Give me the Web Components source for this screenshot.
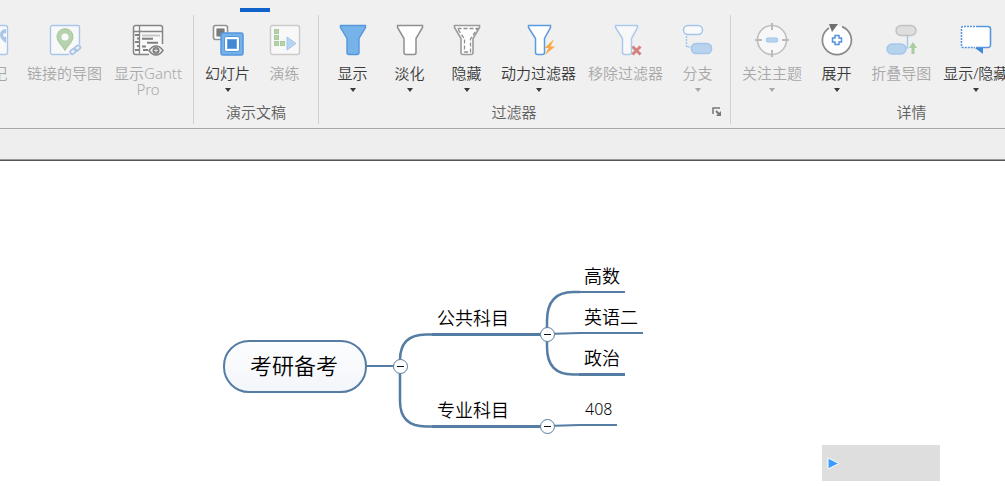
<!DOCTYPE html>
<html lang="zh-CN">
<head>
<meta charset="utf-8">
<title>考研备考</title>
<style>
  html, body { margin: 0; height: 100%; }
  body {
    font-family: "Noto Sans", "Noto Sans CJK SC", sans-serif;
    font-weight: 350;
    background: #fff;
    overflow: hidden;
  }
</style>
</head>
<body>
<mind-app></mind-app>
<script>
const ICONS = {
  tag: `<rect x="1.5" y="1.5" width="29" height="29" rx="2" fill="#f8f8f8" stroke="#a9c6ea" stroke-width="1.4"/>
    <path d="M29 5q-6 0-6 6 0 4 6 8z" fill="#a9c6ea"/><circle cx="28" cy="11" r="2" fill="#f8f8f8"/>`,
  linkmap: `<path d="M20 30.500H3a1.500 1.500 0 0 1-1.500-1.500V3A1.500 1.500 0 0 1 3 1.500h26A1.500 1.500 0 0 1 30.500 3v17" fill="#f8f8f8" stroke="#a9c6ea" stroke-width="1.400"/>
    <path d="M16 26.500C14 22.500 8 18 8 12.500a8 7.800 0 0 1 16 0C24 18 18 22.500 16 26.500z" fill="#b7d2ae" stroke="#a4c79a"/>
    <circle cx="16" cy="13" r="3.600" fill="#fafafa"/>
    <g fill="none" stroke="#a9c6ea" stroke-width="1.800"><rect x="21" y="25.500" width="6.500" height="4" rx="2" transform="rotate(-40 24 27.500)"/><rect x="25" y="22" width="6.500" height="4" rx="2" transform="rotate(-40 28.500 24)"/></g>`,
  gantt: `<path d="M17 30.500H3.500A2 2 0 0 1 1.500 28.500V3.500a2 2 0 0 1 2-2h25a2 2 0 0 1 2 2V20" fill="#f8f8f8" stroke="#858585" stroke-width="1.500"/>
    <path d="M1.500 7.500h29M7.500 1.500v29" stroke="#858585" stroke-width="1.300"/>
    <path d="M10 11.500h18" stroke="#c8c8c8" stroke-width="2"/>
    <path d="M3 11h4M5 14.500h3M3 18h4M5 22h3M3 26h4M10 14.700h11M15 18.700h11M10 22.500h4M11 26h5" stroke="#808080" stroke-width="2"/>
    <path d="M17 26.500c4-6 10-6 14 0-4 6-10 6-14 0z" fill="#ededed" stroke="#808080" stroke-width="1.400"/>
    <circle cx="24" cy="26.500" r="3.500" fill="#808080"/><path d="M24 24.500v4M22 26.500h4" stroke="#ddd"/>`,
  slides: `<rect x="1.500" y="1.500" width="14" height="14" rx="2" fill="#fff" stroke="#919191" stroke-width="1.600"/>
    <rect x="4.500" y="4.500" width="8" height="8" rx="1" fill="#7b7b7b" stroke="#aaa"/>
    <rect x="9" y="9" width="22" height="22" rx="2" fill="#76b2e8" stroke="#5297df" stroke-width="1.500"/>
    <rect x="12.500" y="12.500" width="15" height="15" rx="2" fill="#fff" stroke="#4f91dc"/>
    <rect x="15.500" y="15.500" width="9" height="9" fill="#4488d5" stroke="#69a5e3"/>`,
  rehearse: `<rect x="1.500" y="1.500" width="29" height="29" rx="2" fill="#f8f8f8" stroke="#cacaca" stroke-width="1.400"/>
    <g fill="#b5d2aa" stroke="#a9ca9e"><rect x="5.500" y="5.500" width="4" height="4"/><rect x="5.500" y="11.500" width="4" height="4"/><rect x="5.500" y="17.500" width="4" height="4"/><rect x="11.500" y="17.500" width="4" height="4"/></g>
    <path d="M18 13v13l9-6.500z" fill="#b6d5f0" stroke="#a4c6ea"/>`,
  show: `<path d="M3.500 1.500h25v2l-6.500 11v14a2 2 0 0 1-2 2h-8a2 2 0 0 1-2-2v-14l-6.500-11z" fill="#76b3e9" stroke="#5596dc" stroke-width="1.400"/>`,
  fade: `<path d="M3.500 1.500h25v2l-6.500 11v14a2 2 0 0 1-2 2h-8a2 2 0 0 1-2-2v-14l-6.500-11z" fill="#fff" stroke="#8f8f8f" stroke-width="1.500"/>`,
  hide: `<path d="M3.500 1.500h25v2l-6.500 11v14a2 2 0 0 1-2 2h-8a2 2 0 0 1-2-2v-14l-6.500-11z" fill="#fff" stroke="#9b9b9b" stroke-width="1.600"/>
    <path d="M6.500 4.500h20l-7 10.500V28h-6V15z" fill="none" stroke="#8f8f8f" stroke-width="1.300" stroke-dasharray="4 2"/>`,
  power: `<path d="M5.500 1.500h22v2l-6 11v14a2 2 0 0 1-2 2h-5a2 2 0 0 1-2-2v-14l-7-11z" fill="#fff" stroke="#5a9ae0" stroke-width="1.500"/>
    <path d="M30 16l-8.500 8h4l-3.500 7 10-8.500h-4.500l3-6.500z" fill="#fba846"/>`,
  remove: `<path d="M5.500 1.500h22v2l-6 11v14a2 2 0 0 1-2 2h-5a2 2 0 0 1-2-2v-14l-7-11z" fill="#f8f8f8" stroke="#abc9ed" stroke-width="1.500"/>
    <path d="M22.500 22.500l8 8M30.500 22.500l-8 8" stroke="#d5817e" stroke-width="3"/>`,
  branch: `<rect x="1.500" y="1.500" width="19" height="9" rx="4.500" fill="#fafafa" stroke="#a5c5eb" stroke-width="1.500"/>
    <path d="M4.500 12v11H9" fill="none" stroke="#a5c5eb" stroke-width="1.500" stroke-dasharray="2 1"/>
    <rect x="9.500" y="19.500" width="20" height="10" rx="4.500" fill="#b7d3ee" stroke="#a5c5eb" stroke-width="1.500"/>`,
  focus: `<circle cx="16" cy="16" r="14.500" fill="#f7f7f7" stroke="#c0c0c0" stroke-width="1.700"/>
    <path d="M16-1v7M16 26v7M-1 16h7M26 16h7" stroke="#bababa" stroke-width="2"/>
    <rect x="10.500" y="14" width="11" height="4" rx="1" fill="#b6d4ef" stroke="#a2c4ea"/>`,
  expand: `<circle cx="16" cy="16" r="14" fill="#fff"/><path d="M21 2.600A14.500 14.500 0 1 1 8 4" fill="none" stroke="#8a8a8a" stroke-width="1.700"/>
    <path d="M8 0h9l-6 8z" fill="#707070"/>
    <path d="M14 11.500h4V14h2.500v4H18v2.500h-4V18h-2.500v-4H14z" fill="#fff" stroke="#5593dc" stroke-width="1.500"/>`,
  fold: `<path d="M22.500 11v13h-5" fill="none" stroke="#a6c6eb" stroke-width="1.500"/>
    <rect x="11" y="1.500" width="20" height="10" rx="5" fill="#dedede" stroke="#c1c1c1" stroke-width="1.400"/>
    <rect x="2" y="20" width="19" height="10" rx="5" fill="#b6d3ee" stroke="#a6c6eb" stroke-width="1.400"/>
    <path d="M28 18l-4 6h2.500v6h3v-6H32z" fill="#a8cda0"/>`,
  callout: `<rect x="1.500" y="2.500" width="29" height="21" rx="2" fill="#fff"/>
    <path d="M16 2.500h12a2.500 2.500 0 0 1 2.500 2.500v16a2.500 2.500 0 0 1-2.500 2.500H16" fill="none" stroke="#5896de" stroke-width="1.600"/>
    <path d="M15 2.500H3A1.500 1.500 0 0 0 1.500 4v18A1.500 1.500 0 0 0 3 23.500h12" fill="none" stroke="#5896de" stroke-width="1.500" stroke-dasharray="2 1"/>
    <path d="M15 24l8 6v-6z" fill="#4089d8"/>`
};

const define = (name, html, setup) => {
  const template = document.createElement('template');
  template.innerHTML = html;
  customElements.define(name, class extends HTMLElement {
    constructor() {
      super();
      this.attachShadow({ mode: 'open' }).append(template.content.cloneNode(true));
    }
    connectedCallback() { if (setup) setup(this, this.shadowRoot); }
  });
};

/* Large ribbon command: icon, caption and an optional drop-down caret. */
define('ribbon-command', `
  <style>
    :host { display: block; flex: none; }
    button {
      display: flex; flex-direction: column; align-items: center;
      min-width: 57px; padding: 0 6px; margin: 0; border: 0; background: none;
      font: inherit; font-size: 15px; line-height: 16px; color: #3a3a3a; white-space: nowrap;
    }
    button:disabled { color: #a8a8a8; }
    svg { display: block; width: 32px; height: 32px; overflow: visible; margin-bottom: 9px; }
    i { width: 0; height: 0; margin-top: 7px; border: solid transparent; border-width: 4px 3px 0; border-top-color: currentColor; }
    :host(:not([menu])) i { display: none; }
  </style>
  <button type="button"><svg viewBox="0 0 32 32" aria-hidden="true"></svg><span><slot></slot></span><i></i></button>
`, (host, root) => {
  root.querySelector('svg').innerHTML = ICONS[host.getAttribute('icon')];
  root.querySelector('button').disabled = host.hasAttribute('disabled');
});

define('ribbon-group', `
  <style>
    :host { display: flex; flex-direction: column; flex: none; box-sizing: border-box;
      border-right: 1px solid #d2d2d2; padding: 9px 5px 0; height: 109px; }
    :host([wide]) { min-width: 362px; }
    :host([launcher]) { padding-right: 4px; }
    .items { display: flex; flex: 1; }
    footer { display: flex; align-items: center; height: 24px;
      font-size: 15px; line-height: 24px; color: #606060; text-align: center; white-space: nowrap; }
    footer span { flex: 1; }
    button { display: none; width: 22px; height: 10px; padding: 0 0 0 8px; border: 0; background: none; }
    :host([launcher]) button { display: block; }
    svg { display: block; }
  </style>
  <div class="items"><slot></slot></div>
  <footer><span></span>
    <button type="button" aria-label="过滤器选项"><svg width="10" height="10" viewBox="0 0 10 10"><path d="M1 7V1h7" fill="none" stroke="#777" stroke-width="1.500"/><path d="M4 4l4 4" stroke="#777" stroke-width="2"/><path d="M9 4v5H4z" fill="#777"/></svg></button>
  </footer>
`, (host, root) => { root.querySelector('span').textContent = host.getAttribute('label') || ''; });

define('app-ribbon', `
  <style>
    :host { display: block; background: #f0f0f0; overflow: hidden; border-bottom: 1px solid #a8a8a8; }
    nav { display: flex; height: 12px; margin-bottom: 3px; padding-left: 240px; align-items: flex-end; overflow: hidden; }
    nav button { padding: 0 0 6px; border: 0; border-bottom: 4px solid #0f62c9; background: none;
      font: inherit; font-size: 15px; line-height: 20px; color: #222; white-space: nowrap; }
    .groups { display: flex; margin-left: -41px; padding-bottom: 4px; }
  </style>
  <nav><button type="button">视图</button></nav>
  <div class="groups"><slot></slot></div>
`);

/* Topic on the free canvas; x and y are its place on the map. */
define('map-topic', `
  <style>
    :host { position: absolute; box-sizing: border-box; color: #000; font-size: 18px; line-height: 23px;
      padding: 0 5px 3px; white-space: nowrap; border-bottom: 2px solid #557da3; }
    :host([bold]) { border-bottom-width: 3px; }
    :host([number]) { font-size: 16px; }
    :host([branch]) { padding-right: 32px; }
    :host([root]) { padding: 8px 27px 11px 25px; font-size: 22px; line-height: 30px; border: 2px solid #557da3;
      border-radius: 26px; background: linear-gradient(#fcfdfe, #f3f6fa); }
  </style>
  <slot></slot>
`, host => {
  host.style.left = host.getAttribute('x') + 'px';
  host.style.top = host.getAttribute('y') + 'px';
});

define('map-toggle', `
  <style>
    :host { position: absolute; }
    button { display: grid; place-items: center; width: 15px; height: 15px; padding: 0; box-sizing: border-box;
      border: 1px solid #557da3; border-radius: 50%; background: #fff; }
    button::before { content: ""; width: 7px; height: 1px; background: #111; }
  </style>
  <button type="button" aria-label="折叠"></button>
`, host => {
  host.style.left = host.getAttribute('x') + 'px';
  host.style.top = host.getAttribute('y') + 'px';
});

define('map-canvas', `
  <style>
    :host { display: block; position: relative; flex: 1; overflow: hidden; background: #fff; }
    svg { position: absolute; left: 0; top: 0; overflow: visible; }
    aside { position: absolute; left: 822px; top: 284px; width: 118px; height: 36px; background: #dedede; }
    aside svg { left: 5px; top: 12px; }
  </style>
  <svg width="700" height="300" fill="none" stroke="#557da3" aria-hidden="true">
    <path d="M366 205H400" stroke-width="2"/>
    <path d="M432 173.500H426Q400 173.500 400 199V240Q400 265.500 426 265.500H432" stroke-width="2.500"/>
    <path d="M580 131H573Q547 131 547 160V186Q547 213.500 573 213.500H580" stroke-width="2.500"/>
    <path d="M547 173L580 172M547 265L580 264" stroke-width="2"/>
  </svg>
  <slot></slot>
  <aside><svg width="14" height="13"><path d="M1 1v11l11-5.500z" fill="#3d9bff" stroke="#fff"/></svg></aside>
`);

define('mind-app', `
  <style>
    :host { display: flex; flex-direction: column; height: 100%; }
    .gap { height: 31px; background: #eee; border-bottom: 1px solid #555; box-shadow: inset 0 -1px #999; flex: none; }
    app-ribbon { flex: none; }
  </style>
  <app-ribbon>
    <ribbon-group>
      <ribbon-command icon="tag" disabled>标记</ribbon-command>
      <ribbon-command icon="linkmap" disabled>链接的导图</ribbon-command>
      <ribbon-command icon="gantt" disabled>显示Gantt<br>Pro</ribbon-command>
    </ribbon-group>
    <ribbon-group label="演示文稿">
      <ribbon-command icon="slides" menu>幻灯片</ribbon-command>
      <ribbon-command icon="rehearse" disabled>演练</ribbon-command>
    </ribbon-group>
    <ribbon-group label="过滤器" launcher>
      <ribbon-command icon="show" menu>显示</ribbon-command>
      <ribbon-command icon="fade" menu>淡化</ribbon-command>
      <ribbon-command icon="hide" menu>隐藏</ribbon-command>
      <ribbon-command icon="power" menu>动力过滤器</ribbon-command>
      <ribbon-command icon="remove" disabled>移除过滤器</ribbon-command>
      <ribbon-command icon="branch" menu disabled>分支</ribbon-command>
    </ribbon-group>
    <ribbon-group label="详情" wide>
      <ribbon-command icon="focus" menu disabled>关注主题</ribbon-command>
      <ribbon-command icon="expand" menu>展开</ribbon-command>
      <ribbon-command icon="fold" disabled>折叠导图</ribbon-command>
      <ribbon-command icon="callout" menu>显示/隐藏</ribbon-command>
    </ribbon-group>
  </app-ribbon>
  <div class="gap"></div>
  <map-canvas>
    <map-topic root x="223" y="179">考研备考</map-topic>
    <map-topic branch bold x="432" y="146">公共科目</map-topic>
    <map-topic branch bold x="432" y="238">专业科目</map-topic>
    <map-topic x="579" y="104">高数</map-topic>
    <map-topic x="579" y="145">英语二</map-topic>
    <map-topic bold x="579" y="186">政治</map-topic>
    <map-topic number x="580" y="237">408</map-topic>
    <map-toggle x="393" y="198"></map-toggle>
    <map-toggle x="540" y="166"></map-toggle>
    <map-toggle x="540" y="258"></map-toggle>
  </map-canvas>
`);
</script>
</body>
</html>
